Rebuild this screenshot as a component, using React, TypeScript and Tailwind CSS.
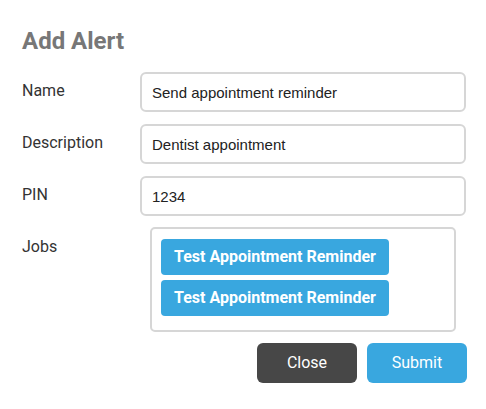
const fields = [
  { label: "Name", value: "Send appointment reminder" },
  { label: "Description", value: "Dentist appointment" },
  { label: "PIN", value: "1234" },
];

const jobs = ["Test Appointment Reminder", "Test Appointment Reminder"];

export default function App() {
  return (
    <div className="min-h-[409px] w-[486px] bg-white pl-[22px] pt-[25px] font-['Roboto',sans-serif]">
      <h2 className="text-[24px] font-bold leading-8 text-[#777777]">Add Alert</h2>

      <form className="mt-[15px] w-[445px]" onSubmit={(e) => e.preventDefault()}>
        <div className="flex flex-col gap-3">
          {fields.map((f) => (
            <div key={f.label} className="grid grid-cols-[118px_1fr] items-start">
              <label className="pt-[7px] text-[16px] leading-6 text-[#333333]">{f.label}</label>
              <input
                defaultValue={f.value}
                className="h-10 w-[326px] rounded-[6px] border-2 border-[#d6d6d6] px-[10px] font-['Liberation_Sans',Arial,sans-serif] text-[15px] text-[#222222] outline-none"
              />
            </div>
          ))}

          {/* Jobs */}
          <div className="grid grid-cols-[128px_1fr] items-start">
            <label className="pt-[7px] text-[16px] leading-6 text-[#333333]">Jobs</label>
            <div className="flex h-[105px] w-[306px] -translate-y-px flex-col items-start gap-[5px] rounded-[5px] border-2 border-[#d6d6d6] pl-[9px] pt-[10px]">
              {jobs.map((j, i) => (
                <span
                  key={i}
                  className="flex h-9 w-[228px] items-center justify-center rounded-[4px] bg-[#39a7df] text-[16px] font-bold text-white"
                >
                  {j}
                </span>
              ))}
            </div>
          </div>
        </div>

        <div className="mt-[10px] flex justify-end gap-[10px]">
          <button type="button" className="h-10 w-[100px] rounded-[6px] bg-[#474747] text-[16px] text-white">
            Close
          </button>
          <button type="submit" className="h-10 w-[100px] rounded-[6px] bg-[#39a7df] text-[16px] text-white">
            Submit
          </button>
        </div>
      </form>
    </div>
  );
}
